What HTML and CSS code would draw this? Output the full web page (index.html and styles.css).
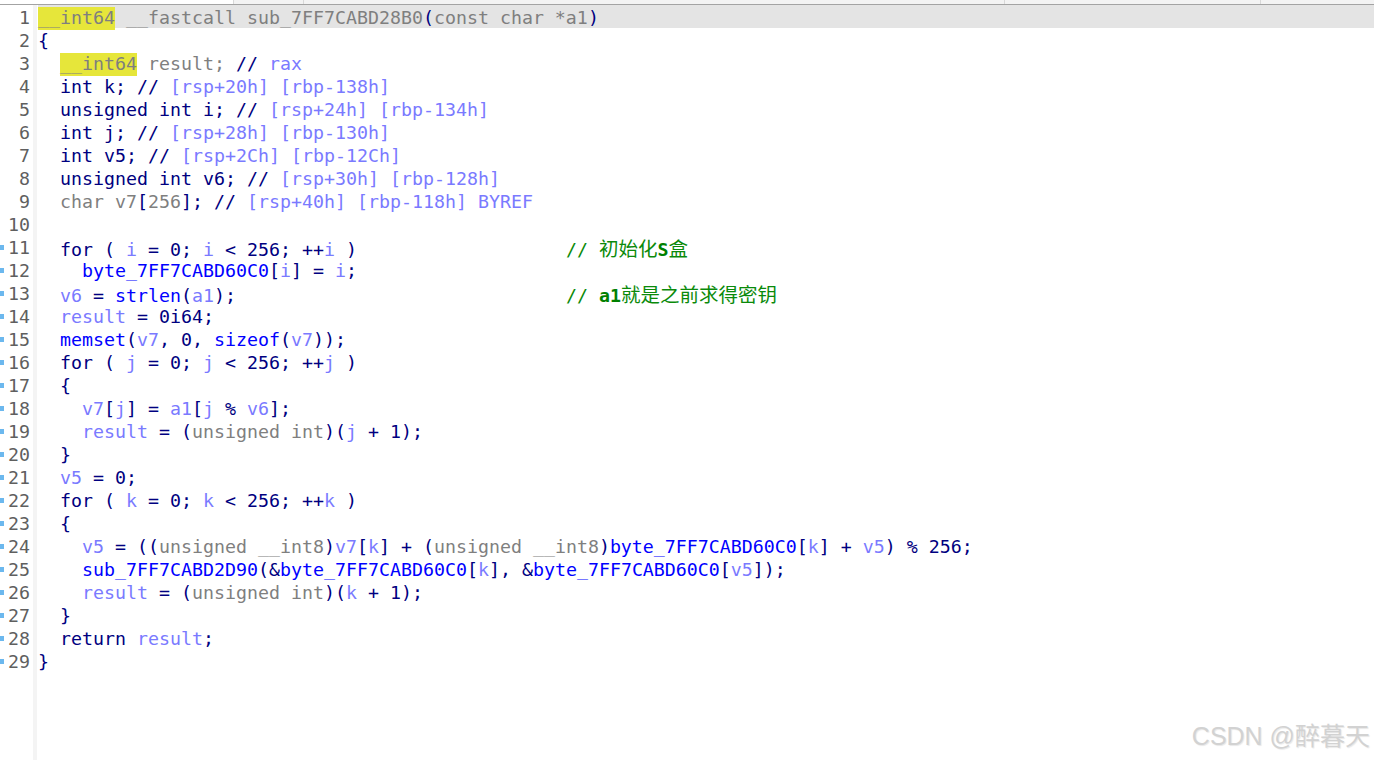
FILE: index.html
```html
<!DOCTYPE html>
<html lang="zh-CN">
<head>
<meta charset="utf-8">
<title>Pseudocode</title>
<link rel="stylesheet" href="styles.css">
</head>
<body>
<div class="tabs">
  <div class="tab-blank"></div>
  <div class="tab t1"></div>
  <div class="tab t2"></div>
  <div class="tab t3"></div>
  <div class="tab t4"></div>
</div>
<div class="editor">
  <div class="gutter">
    <div class="num"><span class="mk none"></span>1</div>
    <div class="num"><span class="mk none"></span>2</div>
    <div class="num"><span class="mk none"></span>3</div>
    <div class="num"><span class="mk none"></span>4</div>
    <div class="num"><span class="mk none"></span>5</div>
    <div class="num"><span class="mk none"></span>6</div>
    <div class="num"><span class="mk none"></span>7</div>
    <div class="num"><span class="mk none"></span>8</div>
    <div class="num"><span class="mk none"></span>9</div>
    <div class="num"><span class="mk none"></span>10</div>
    <div class="num"><span class="mk"></span>11</div>
    <div class="num"><span class="mk"></span>12</div>
    <div class="num"><span class="mk"></span>13</div>
    <div class="num"><span class="mk"></span>14</div>
    <div class="num"><span class="mk"></span>15</div>
    <div class="num"><span class="mk"></span>16</div>
    <div class="num"><span class="mk"></span>17</div>
    <div class="num"><span class="mk"></span>18</div>
    <div class="num"><span class="mk"></span>19</div>
    <div class="num"><span class="mk"></span>20</div>
    <div class="num"><span class="mk"></span>21</div>
    <div class="num"><span class="mk"></span>22</div>
    <div class="num"><span class="mk"></span>23</div>
    <div class="num"><span class="mk"></span>24</div>
    <div class="num"><span class="mk"></span>25</div>
    <div class="num"><span class="mk"></span>26</div>
    <div class="num"><span class="mk"></span>27</div>
    <div class="num"><span class="mk"></span>28</div>
    <div class="num"><span class="mk"></span>29</div>
  </div>
  <div class="code">
<div class="ln cur"><span class="h">__int64</span><span class="g"> __fastcall sub_7FF7CABD28B0</span><span class="k">(</span><span class="g">const char *a1</span><span class="k">)</span></div>
<div class="ln"><span class="k">{</span></div>
<div class="ln">  <span class="h">__int64</span><span class="g"> result; </span><span class="k">// </span><span class="v">rax</span></div>
<div class="ln"><span class="k">  int k; // </span><span class="v">[rsp+20h] [rbp-138h]</span></div>
<div class="ln"><span class="k">  unsigned int i; // </span><span class="v">[rsp+24h] [rbp-134h]</span></div>
<div class="ln"><span class="k">  int j; // </span><span class="v">[rsp+28h] [rbp-130h]</span></div>
<div class="ln"><span class="k">  int v5; // </span><span class="v">[rsp+2Ch] [rbp-12Ch]</span></div>
<div class="ln"><span class="k">  unsigned int v6; // </span><span class="v">[rsp+30h] [rbp-128h]</span></div>
<div class="ln">  <span class="g">char v7</span><span class="k">[</span><span class="g">256</span><span class="k">]; // </span><span class="v">[rsp+40h] [rbp-118h] BYREF</span></div>
<div class="ln"> </div>
<div class="ln"><span class="k">  for ( </span><span class="v">i</span><span class="k"> = 0; </span><span class="v">i</span><span class="k"> &lt; 256; ++</span><span class="v">i</span><span class="k"> )</span>                   <span class="c">// <span class="cjk">初始化</span><b>S</b><span class="cjk">盒</span></span></div>
<div class="ln">    <span class="f">byte_7FF7CABD60C0</span><span class="k">[</span><span class="v">i</span><span class="k">] = </span><span class="v">i</span><span class="k">;</span></div>
<div class="ln">  <span class="v">v6</span><span class="k"> = </span><span class="f">strlen</span><span class="k">(</span><span class="v">a1</span><span class="k">);</span>                              <span class="c">// <b>a1</b><span class="cjk">就是之前求得密钥</span></span></div>
<div class="ln">  <span class="v">result</span><span class="k"> = 0i64;</span></div>
<div class="ln">  <span class="f">memset</span><span class="k">(</span><span class="v">v7</span><span class="k">, 0, </span><span class="f">sizeof</span><span class="k">(</span><span class="v">v7</span><span class="k">));</span></div>
<div class="ln"><span class="k">  for ( </span><span class="v">j</span><span class="k"> = 0; </span><span class="v">j</span><span class="k"> &lt; 256; ++</span><span class="v">j</span><span class="k"> )</span></div>
<div class="ln"><span class="k">  {</span></div>
<div class="ln">    <span class="v">v7</span><span class="k">[</span><span class="v">j</span><span class="k">] = </span><span class="v">a1</span><span class="k">[</span><span class="v">j</span><span class="k"> % </span><span class="v">v6</span><span class="k">];</span></div>
<div class="ln">    <span class="v">result</span><span class="k"> = (</span><span class="g">unsigned int</span><span class="k">)(</span><span class="v">j</span><span class="k"> + 1);</span></div>
<div class="ln"><span class="k">  }</span></div>
<div class="ln">  <span class="v">v5</span><span class="k"> = 0;</span></div>
<div class="ln"><span class="k">  for ( </span><span class="v">k</span><span class="k"> = 0; </span><span class="v">k</span><span class="k"> &lt; 256; ++</span><span class="v">k</span><span class="k"> )</span></div>
<div class="ln"><span class="k">  {</span></div>
<div class="ln">    <span class="v">v5</span><span class="k"> = ((</span><span class="g">unsigned __int8</span><span class="k">)</span><span class="v">v7</span><span class="k">[</span><span class="v">k</span><span class="k">] + (</span><span class="g">unsigned __int8</span><span class="k">)</span><span class="f">byte_7FF7CABD60C0</span><span class="k">[</span><span class="v">k</span><span class="k">] + </span><span class="v">v5</span><span class="k">) % 256;</span></div>
<div class="ln">    <span class="f">sub_7FF7CABD2D90</span><span class="k">(&amp;</span><span class="f">byte_7FF7CABD60C0</span><span class="k">[</span><span class="v">k</span><span class="k">], &amp;</span><span class="f">byte_7FF7CABD60C0</span><span class="k">[</span><span class="v">v5</span><span class="k">]);</span></div>
<div class="ln">    <span class="v">result</span><span class="k"> = (</span><span class="g">unsigned int</span><span class="k">)(</span><span class="v">k</span><span class="k"> + 1);</span></div>
<div class="ln"><span class="k">  }</span></div>
<div class="ln"><span class="k">  return </span><span class="v">result</span><span class="k">;</span></div>
<div class="ln"><span class="k">}</span></div>
  </div>
</div>
<div class="watermark">CSDN @醉暮天</div>
</body>
</html>
```
FILE: styles.css
```css
html, body {
  margin: 0;
  padding: 0;
  background: #ffffff;
  overflow: hidden;
}
body {
  width: 1374px;
  height: 760px;
  position: relative;
  font-family: "DejaVu Sans Mono", "Noto Sans CJK SC", monospace;
}
.tabs {
  display: flex;
  height: 4px;
  border-bottom: 1px solid #a3a3a3;
  background: #f3f3f3;
}
.tab-blank {
  width: 233px;
  background: #ffffff;
}
.tab {
  border-left: 1px solid #d8d8d8;
}
.t1 { width: 69px; }
.t2 { width: 700px; }
.t3 { width: 255px; }
.t4 { flex: 1; }
.editor {
  display: flex;
  height: 755px;
}
.gutter {
  width: 33px;
  border-right: 4px solid #f4f4f4;
  flex: none;
}
.num {
  display: flex;
  align-items: center;
  justify-content: space-between;
  height: 23px;
  padding-top: 1px;
  padding-right: 3px;
  font-size: 18.27px;
  color: #5f5f5f;
  box-sizing: border-box;
}
.mk {
  width: 4px;
  height: 5px;
  background: #6cb8ee;
}
.mk.none {
  background: transparent;
}
.code {
  flex: 1;
  padding-left: 1px;
}
.ln {
  height: 23px;
  box-sizing: border-box;
  padding-top: 1px;
  line-height: 23px;
  white-space: pre;
  font-size: 18.27px;
  color: #000080;
}
.ln.cur {
  background: #e4e4e4;
}
.k { color: #000080; }
.f { color: #0000ff; }
.v { color: #7a7aff; }
.g { color: #7f7f7f; }
.h {
  background: #e6e63a;
  color: #7f7f7f;
  padding-bottom: 2px;
}
.c { color: #0a8a0a; }
.c b {
  font-weight: bold;
  color: #008000;
}
.cjk {
  font-family: "Noto Sans CJK SC", sans-serif;
  font-size: 19.5px;
}
.watermark {
  position: absolute;
  right: 4px;
  bottom: 8px;
  font-family: "Liberation Sans", "Noto Sans CJK SC", sans-serif;
  font-size: 25px;
  color: #d2d2d2;
  text-shadow: 1px 1px 1px #e8e8e8;
}
```
